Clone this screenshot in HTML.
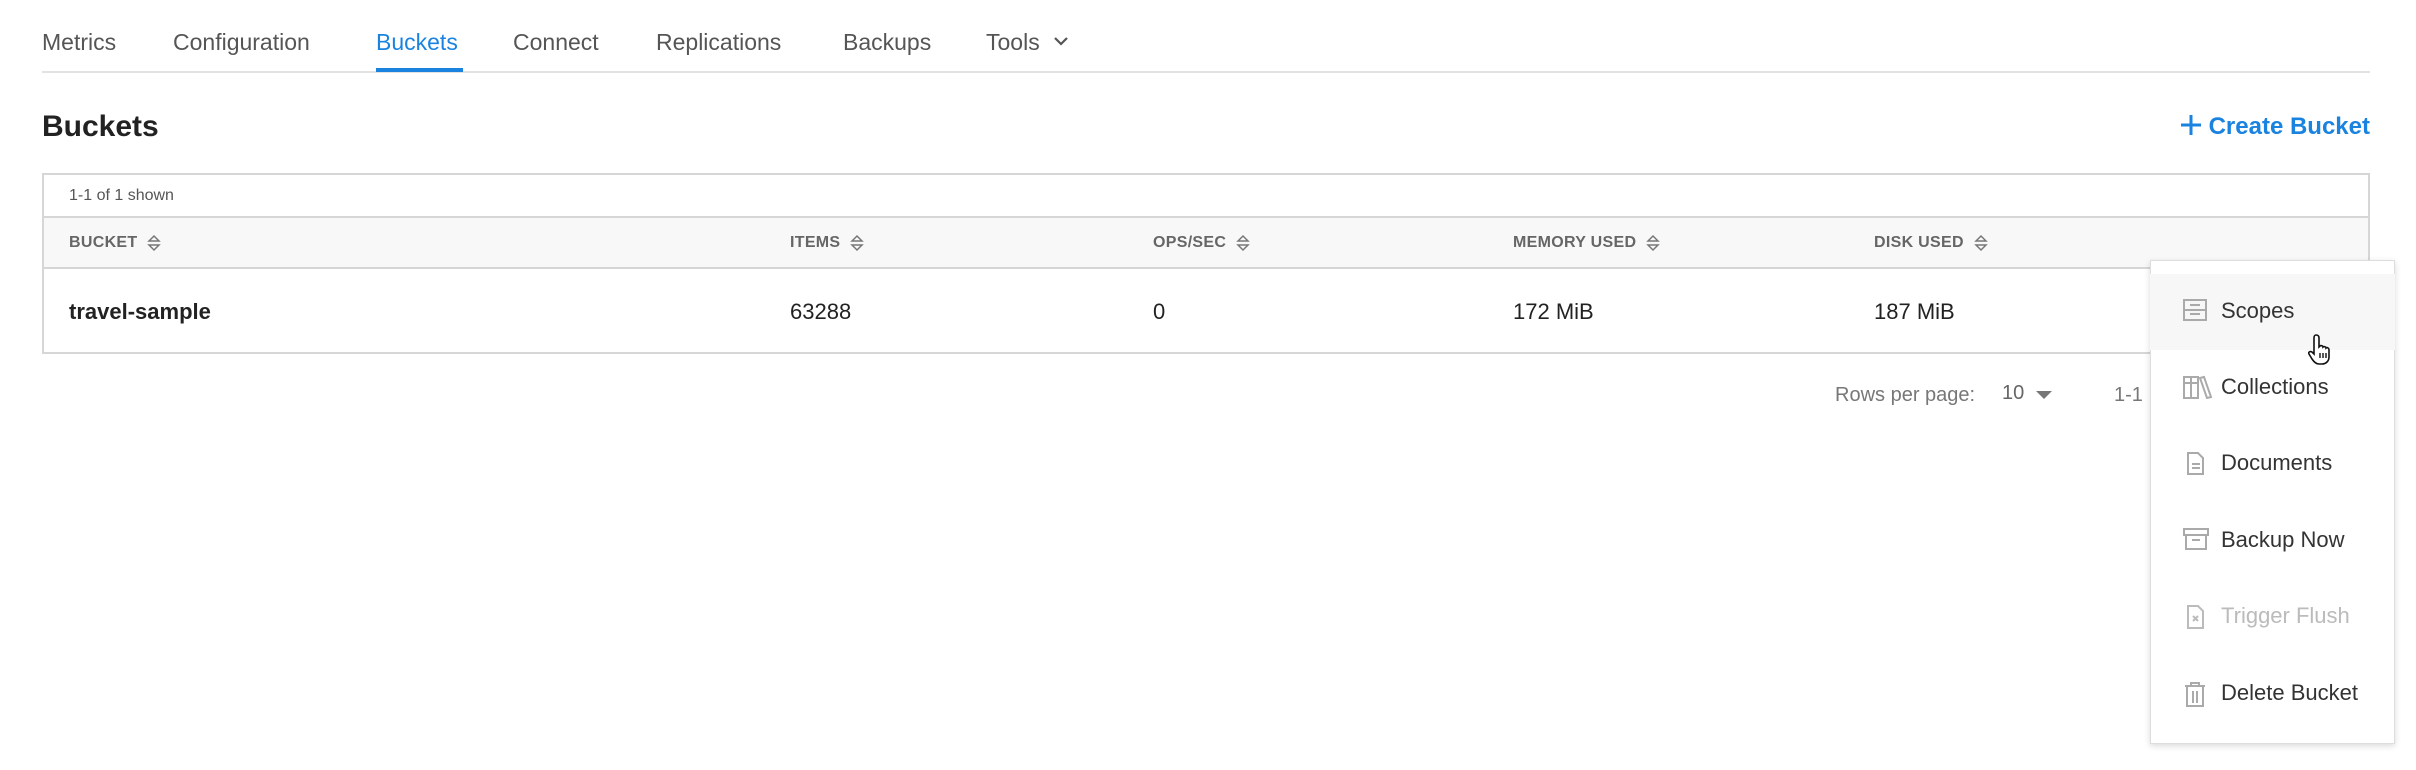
<!DOCTYPE html>
<html><head><style>
*{margin:0;padding:0;box-sizing:border-box}
body{width:2416px;height:770px;background:#fff;font-family:"Liberation Sans",sans-serif;position:relative;overflow:hidden;color:#222}
.a{position:absolute;white-space:nowrap}
.tab{font-size:23px;color:#555;top:29px}
.th{font-size:16px;color:#666;font-weight:bold;top:234px;letter-spacing:.3px}
.td{font-size:22px;color:#222;top:299px}
.mi{position:absolute;left:2150px;width:245px;height:76px;}
.mi span{position:absolute;left:71px;top:24px;font-size:22px;color:#333}
.mi svg{position:absolute;left:33px;top:25px}
.sort{display:inline-block;vertical-align:middle;margin-left:10px}
</style></head><body>
<div class="a tab" style="left:42px">Metrics</div>
<div class="a tab" style="left:173px">Configuration</div>
<div class="a tab" style="left:376px;color:#1a83e0">Buckets</div>
<div class="a tab" style="left:513px">Connect</div>
<div class="a tab" style="left:656px">Replications</div>
<div class="a tab" style="left:843px">Backups</div>
<div class="a tab" style="left:986px">Tools</div>
<svg class="a" style="left:1053px;top:36px" width="16" height="12"><path d="M2 2l6 6 6-6" stroke="#555" stroke-width="2.2" fill="none"/></svg>
<div class="a" style="left:42px;top:71px;width:2328px;height:2px;background:#e2e2e2"></div>
<div class="a" style="left:376px;top:68px;width:87px;height:4px;background:#1a83e0"></div>
<div class="a" style="left:42px;top:110px;font-size:30px;font-weight:bold;color:#222">Buckets</div>
<div class="a" style="right:46px;top:113px;font-size:24px;font-weight:bold;color:#1a83e0">Create Bucket</div>
<svg class="a" style="left:2180px;top:114px" width="22" height="22"><path d="M11 1v20M1 11h20" stroke="#1a83e0" stroke-width="3"/></svg>
<div class="a" style="left:42px;top:173px;width:2328px;height:181px;border:2px solid #d6d6d6"></div>
<div class="a" style="left:44px;top:216px;width:2324px;height:53px;background:#f8f8f8;border-top:2px solid #d6d6d6;border-bottom:2px solid #d6d6d6"></div>
<div class="a" style="left:69px;top:187px;font-size:16px;color:#555">1-1 of 1 shown</div>
<svg width="0" height="0" style="position:absolute"><defs><g id="s"><path d="M2 7l5-5 5 5zM2 11l5 5 5-5z" fill="none" stroke="#777" stroke-width="1.5"/></g></defs></svg>
<div class="a th" style="left:69px">BUCKET<svg class="sort" width="14" height="18"><use href="#s"/></svg></div>
<div class="a th" style="left:790px">ITEMS<svg class="sort" width="14" height="18"><use href="#s"/></svg></div>
<div class="a th" style="left:1153px">OPS/SEC<svg class="sort" width="14" height="18"><use href="#s"/></svg></div>
<div class="a th" style="left:1513px">MEMORY USED<svg class="sort" width="14" height="18"><use href="#s"/></svg></div>
<div class="a th" style="left:1874px">DISK USED<svg class="sort" width="14" height="18"><use href="#s"/></svg></div>
<div class="a td" style="left:69px;font-weight:bold">travel-sample</div>
<div class="a td" style="left:790px">63288</div>
<div class="a td" style="left:1153px">0</div>
<div class="a td" style="left:1513px">172 MiB</div>
<div class="a td" style="left:1874px">187 MiB</div>
<div class="a" style="left:1835px;top:384px;font-size:20px;color:#777">Rows per page:</div>
<div class="a" style="left:2002px;top:382px;font-size:20px;color:#666">10</div>
<svg class="a" style="left:2036px;top:391px" width="16" height="9"><path d="M0 0h16l-8 8z" fill="#777"/></svg>
<div class="a" style="left:2114px;top:384px;font-size:20px;color:#777">1-1</div>
<div class="a" style="left:2150px;top:260px;width:245px;height:484px;background:#fff;border:1px solid #ddd;box-shadow:0 2px 6px rgba(0,0,0,.15)"></div>
<div class="mi" style="top:274px;background:#f7f7f7"><svg width="24" height="22"><rect x="1" y="1" width="22" height="20" fill="none" stroke="#aaa" stroke-width="2"/><path d="M1 11h22M7 6h10M7 15h10" stroke="#aaa" stroke-width="2"/></svg><span>Scopes</span></div>
<svg class="a" style="left:2308px;top:333px" width="26" height="32"><path d="M8 2c2 0 3 1 3 3v9l1-1c1-1 3 0 3 1 1-1 3 0 3 1 1-1 3 0 3 2v7c0 4-3 7-7 7h-3c-3 0-5-2-7-5l-3-5c-1-2 1-3 3-2l2 2V5c0-2 1-3 2-3z" fill="#fff" stroke="#111" stroke-width="1.6"/><path d="M12 20v5M15 20v5M18 20v5" stroke="#111" stroke-width="1.4"/></svg>
<div class="mi" style="top:350px"><svg width="30" height="24"><path d="M1 2h7v21H1zM8 2h7v21H8zM1 8h14M17 3l4-1 7 20-4 1z" fill="none" stroke="#aaa" stroke-width="2"/></svg><span>Collections</span></div>
<div class="mi" style="top:426px"><svg width="24" height="24"><path d="M5 2h10l5 5v16H5zM9 13h8M9 17h8" fill="none" stroke="#aaa" stroke-width="2"/></svg><span>Documents</span></div>
<div class="mi" style="top:503px"><svg width="26" height="22"><path d="M1 1h24v6H1zM3 7v14h20V7M9 12h8" fill="none" stroke="#aaa" stroke-width="2"/></svg><span>Backup Now</span></div>
<div class="mi" style="top:579px"><svg width="24" height="26"><path d="M5 2h10l5 5v17H5zM10 12l5 5M15 12l-5 5" fill="none" stroke="#bbb" stroke-width="2"/></svg><span style="color:#bbb">Trigger Flush</span></div>
<div class="mi" style="top:656px"><svg width="24" height="26"><path d="M2 5h20M8 5V2h8v3M4 5v20h16V5M10 10v12M14 10v12" fill="none" stroke="#aaa" stroke-width="2"/></svg><span>Delete Bucket</span></div>
</body></html>
